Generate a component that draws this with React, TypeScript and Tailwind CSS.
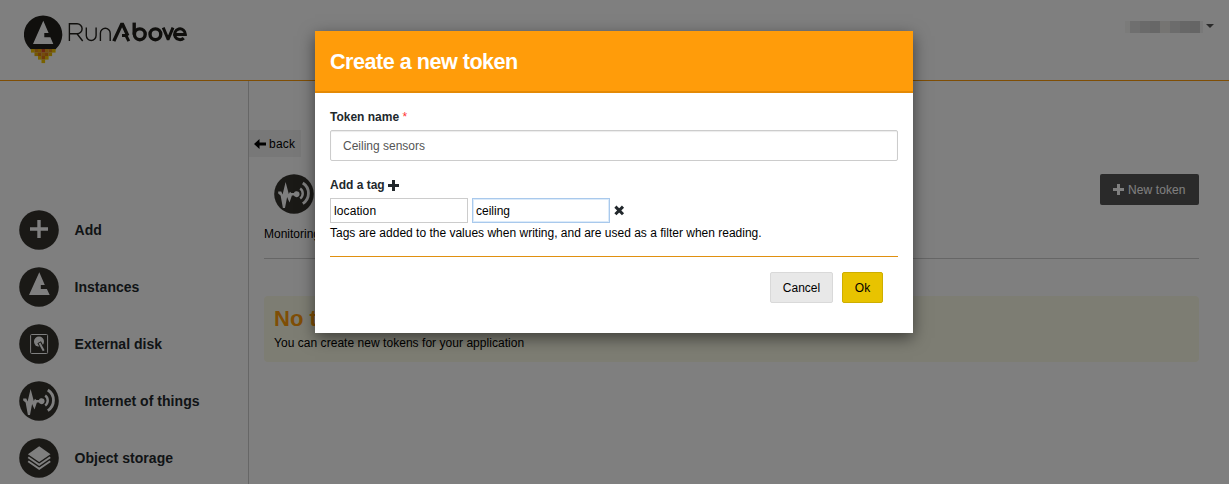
import React from "react";

const Disc = ({ children }: { children: React.ReactNode }) => (
  <svg width="40" height="40" viewBox="0 0 40 40" className="shrink-0">
    <circle cx="20" cy="20" r="19.8" fill="#34322d" />
    {children}
  </svg>
);

const IotIcon = () => (
  <Disc>
    <path d="M4.2 17.6h3.1l1.3 3 3-12.6 3.2 12 1.2-2.2 1.3 1.1h2.6a3 3 0 1 1 0 2.6h-2l-2.4 7-2.4-5.4L11 34H8.9L6.6 21.4 4.2 19.5z" fill="#fff" />
    <path d="M26.2 14.5a6.2 6.2 0 0 1 0 10" fill="none" stroke="#fff" strokeWidth="2.4" />
    <path d="M28.8 9a12.2 12.2 0 0 1 0 20.6" fill="none" stroke="#fff" strokeWidth="2.8" />
  </Disc>
);

const AddIcon = () => (
  <Disc>
    <path d="M18.3 10h3.4v7.3H29v3.4h-7.3V28h-3.4v-7.3H11v-3.4h7.3z" fill="#fff" />
  </Disc>
);

const InstanceIcon = () => (
  <Disc>
    <path d="M20.3 5.3L25.8 18h-4v4h6.1l2.8 6H10z" fill="#fff" />
  </Disc>
);

const DiskIcon = () => (
  <Disc>
    <rect x="11.6" y="10.5" width="17" height="19" rx="1" fill="none" stroke="#fff" />
    <circle cx="20" cy="17.6" r="5" fill="#fff" />
    <path d="M20.2 18.2l4.6 8.6" stroke="#34322d" strokeWidth="4" />
    <path d="M20.5 19l4.2 7.8" stroke="#fff" strokeWidth="2" />
  </Disc>
);

const StorageIcon = () => (
  <Disc>
    <path d="M20.2 8.3l11.3 7.9-11.3 7.9L8.9 16.2z" fill="#fff" />
    <path d="M9.2 19.2l11 7.6 11-7.6M9.2 23.2l11 7.6 11-7.6" fill="none" stroke="#fff" strokeWidth="2" />
  </Disc>
);

const Plus = () => (
  <svg width="11" height="11" viewBox="0 0 11 11" className="inline-block shrink-0">
    <path d="M4 0h3v4h4v3H7v4H4V7H0V4h4z" fill="currentColor" />
  </svg>
);

const flame: [number, string][][] = [
  [[0, "#f2c500"], [1, "#e08c19"], [2, "#e8a800"], [3, "#d84a24"], [4, "#e8a21c"], [5, "#e08c19"], [6, "#f2c500"]],
  [[1, "#e8b000"], [2, "#de7c19"], [3, "#e89a18"], [4, "#de7c18"], [5, "#e8b800"]],
  [[2, "#f2c500"], [3, "#de7418"], [4, "#f2c500"]],
  [[3, "#f2c500"]],
];

const Logo = () => (
  <svg width="170" height="50" viewBox="0 0 170 50">
    <path d="M6.6 34.2a19.2 19.2 0 1 1 25 0z" fill="#201f1b" />
    <path d="M19.3 5.7L24.6 18h-4.3v4.2h6.1L29.3 29H9z" fill="#fff" />
    {flame.map((row, r) =>
      row.map(([c, color]) => (
        <rect key={`${r}-${c}`} x={7 + c * 3.5} y={34 + r * 3.5} width="3.6" height="3.6" fill={color} />
      )),
    )}
    <g fill="none" stroke="#201f1b" strokeWidth="1.4">
      <path d="M45.4 26V8.7h7.7a5 5 0 0 1 0 10h-7.7M53 18.7l5.7 7.3M62.3 12.6v8a4.9 4.9 0 0 0 9.8 0v-8M76.4 26v-7.8a4.9 4.9 0 0 1 9.8 0V26" />
    </g>
    <g fill="none" stroke="#201f1b" strokeWidth="3.4">
      <path d="M89.8 26.1L97.6 9.4h1l5.2 11.4" />
      <path d="M98 20.6h4l2.8 5.6" strokeWidth="3" />
      <path d="M110.2 7.6v12" />
      <circle cx="115.8" cy="19.3" r="5.4" />
      <circle cx="131.4" cy="19.3" r="5.4" />
      <path d="M139.2 12.6l4.7 11.2h.4l4.7-11.2M151.4 19.4h10a5.4 5.4 0 1 0-1.6 3.7" strokeWidth="3" />
    </g>
  </svg>
);

const nav = [
  { label: "Add", icon: <AddIcon />, indent: false },
  { label: "Instances", icon: <InstanceIcon />, indent: false },
  { label: "External disk", icon: <DiskIcon />, indent: false },
  { label: "Internet of things", icon: <IotIcon />, indent: true },
  { label: "Object storage", icon: <StorageIcon />, indent: false },
];

const mosaic = ["w-[5px] bg-[#f6f6f4]", "w-[10px] bg-[#dedede]", "w-[10px] bg-[#d4d4d4]", "w-[10px] bg-[#cecece]", "w-[10px] bg-[#eae9e4]", "w-[10px] bg-[#d9d9d9]", "w-[10px] bg-[#cecece]", "w-[10px] bg-[#cacaca]", "w-[3px] bg-[#f1f1f1]"];

function Page() {
  return (
    <div className="flex h-[484px] w-full flex-col bg-white">
      <header className="flex h-[81px] shrink-0 justify-between border-b border-[#ff9c0a] pt-[15px] pr-[15px] pl-6">
        <Logo />
        <div className="mt-[6px] flex h-3 gap-[3px]">
          <div className="flex h-3">
            {mosaic.map((cell, i) => <span key={i} className={cell} />)}
          </div>
          <svg width="8" height="4" viewBox="0 0 8 4" className="mt-[3px]"><path d="M0 0h8L4 4z" fill="#555" /></svg>
        </div>
      </header>
      <div className="flex min-h-0 flex-1">
        <nav className="flex w-[249px] shrink-0 flex-col gap-[17px] border-r border-[#ccc] pt-[129px] pl-[19px]">
          {nav.map(({ label, icon, indent }) => (
            <div key={label} className={indent ? "flex h-10 shrink-0 items-center gap-[25.5px]" : "flex h-10 shrink-0 items-center gap-[15.5px]"}>
              {icon}
              <span className="pt-px text-[14px] tracking-[0.04px] font-bold text-[#22282c]">{label}</span>
            </div>
          ))}
        </nav>
        <main className="flex-1 pt-[49px]">
          <div className="flex h-[27px] w-[52px] items-center gap-[3px] bg-[#f0f0f0] pl-[5px] text-xs">
            <svg width="12" height="10" viewBox="0 0 12 10" className="shrink-0"><path d="M0 5l5.5-5v3.4H12v3.2H5.5V10z" fill="#000" /></svg>
            <span className="pt-px tracking-[0.25px]">back</span>
          </div>
          <div className="mr-[30px] ml-[15px]">
            <div className="flex h-[58px] items-center justify-between pt-[16px] pl-[10px]">
              <IotIcon />
              <button className="mb-[9px] flex h-[31px] w-[99px] items-center gap-1 rounded-[2px] bg-[#555] pl-[13px] text-xs tracking-[0.1px] text-white"><Plus /><span className="pt-px">New token</span></button>
            </div>
            <p className="mt-[10px] h-[18px] text-xs leading-[18px]">Monitoring</p>
            <hr className="mt-[15px] border-[#ccc]" />
            <section className="mt-[37px] h-[66px] rounded-[4px] bg-[#fbfae6] px-[10px] pt-[11px]">
              <h2 className="text-[22px] leading-6 font-bold text-[#ff9c0a]">No tokens</h2>
              <p className="mt-[3px] text-xs leading-[18px] tracking-[0.04px]">You can create new tokens for your application</p>
            </section>
          </div>
        </main>
      </div>
    </div>
  );
}

function TokenDialog() {
  return (
    <div role="dialog" className="flex h-[302px] w-[598px] flex-col bg-white shadow-[0_5px_15px_rgba(0,0,0,0.5)]">
      <div className="flex h-[62px] shrink-0 items-center border-b-2 border-[#e48a06] bg-[#ff9c0a] pl-[15px]">
        <h1 className="pt-[3px] text-[21.6px] font-bold tracking-[-0.5px] text-white">Create a new token</h1>
      </div>
      <div className="flex flex-col px-[15px] pt-[15px] text-xs">
        <label className="h-[18px] leading-[18px] font-bold text-[#22282c]">Token name <span className="font-normal text-[#f33]">*</span></label>
        <input defaultValue="Ceiling sensors" className="mt-1 h-[31px] w-full rounded-[2px] border border-[#ccc] px-3 text-[#555] shadow-[inset_0_1px_1px_rgba(0,0,0,0.08)] outline-none" />
        <div className="mt-[15px] flex h-[18px] items-center gap-[3px] font-bold text-[#22282c]"><span>Add a tag</span><Plus /></div>
        <div className="mt-1 flex items-center gap-1">
          <input defaultValue="location" className="h-[25px] w-[138px] border border-[#ccc] px-[3px] tracking-[0.1px] outline-none" />
          <input defaultValue="ceiling" className="h-[25px] w-[138px] border border-[#a9c9ec] px-[3px] shadow-[inset_0_0_0_1px_#dcebfa] outline-none" />
          <svg width="11" height="11" viewBox="0 0 11 11"><path d="M1.4 1.6l7.6 7.6M9 1.6L1.4 9.2" stroke="#22282c" strokeWidth="3" /></svg>
        </div>
        <p className="mt-px h-[18px] leading-[18px]">Tags are added to the values when writing, and are used as a filter when reading.</p>
        <div className="mt-[14px] flex justify-end gap-[9px] border-t border-[#e09010] pt-[15px] pr-[15px]">
          <button className="h-[31px] w-[63px] rounded-[2px] border border-[#d9d9d9] bg-[#e8e8e8] pt-px">Cancel</button>
          <button className="h-[31px] w-[41px] rounded-[2px] border border-[#ceae00] bg-[#e8c300] pt-px">Ok</button>
        </div>
      </div>
    </div>
  );
}

export default function App() {
  return (
    <div className="relative h-[484px] w-full overflow-hidden font-['Liberation_Sans',Arial,sans-serif] text-black">
      <Page />
      <div className="absolute inset-0 flex items-start bg-black/50 pt-[31px] pl-[315px]">
        <TokenDialog />
      </div>
    </div>
  );
}
